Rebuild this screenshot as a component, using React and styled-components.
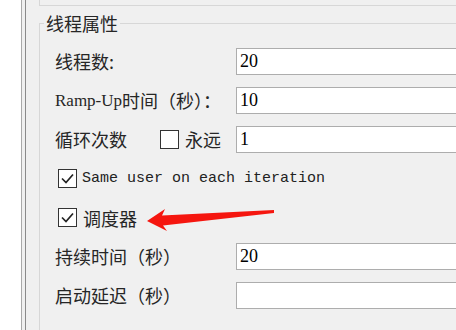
import styled, {createGlobalStyle} from "styled-components";

const GlobalStyle = createGlobalStyle`
  body {
    margin: 0;
    background: #f0f0f0;
    overflow: hidden;
  }
`;

const Page = styled.div`
  display: flex;
  width: 456px;
  height: 330px;
  overflow: hidden;
  font-family: "Noto Sans CJK SC", "Liberation Sans", sans-serif;
  font-size: 18px;
  color: #262626;
`;

const Gutter = styled.div`
  width: 21px;
  flex-shrink: 0;
  background: #ffffff;
`;

const Frame = styled.div`
  flex: 1;
  display: flex;
  border-left: 1px solid #a9a9a9;
  padding-left: 3px;
`;

const Inner = styled.div`
  flex: 1;
  position: relative;
  border-left: 1px solid #8a8a8a;
  padding-left: 13px;
`;

const TopBox = styled.div`
  height: 5px;
  width: 460px;
  border-left: 1px solid #d7d7d7;
  border-bottom: 1px solid #d7d7d7;
`;

const Group = styled.fieldset`
  margin: 6px 0 0;
  width: 460px;
  border: 1px solid #d7d7d7;
  padding: 14px 0 40px 15px;
  min-width: 0;
`;

const Legend = styled.legend`
  margin-left: -11px;
  padding: 0 2px;
  line-height: 22px;
  font-size: 18px;
`;

const Form = styled.div`
  display: flex;
  flex-direction: column;
  gap: 12px;
`;

const Row = styled.div`
  display: flex;
  align-items: center;
  height: 27px;
  padding-left: ${(p) => p.$indent || 0}px;
`;

const Label = styled.div`
  width: 181px;
  flex-shrink: 0;
  display: flex;
  align-items: center;
  line-height: 27px;
  white-space: nowrap;
`;

const Latin = styled.span`
  font-family: "Liberation Serif", serif;
  font-size: 17px;
`;

const Mono = styled.span`
  font-family: "Liberation Mono", monospace;
  font-size: 15px;
  color: #222;
`;

const Field = styled.div`
  flex: 1;
  height: 27px;
  box-sizing: border-box;
  background: #ffffff;
  border: 1px solid #adadad;
  padding-left: 3px;
  font-family: "Liberation Serif", serif;
  font-size: 18px;
  line-height: 25px;
  color: #000;
`;

const Box = styled.span`
  width: 19px;
  height: 19px;
  box-sizing: border-box;
  flex-shrink: 0;
  background: #ffffff;
  border: 1px solid #333333;
  display: inline-flex;
  align-items: center;
  justify-content: center;
  margin-left: ${(p) => p.$left || 0}px;
  margin-right: ${(p) => p.$right || 5}px;
`;

const Arrow = styled.svg`
  position: absolute;
  left: -26px;
  top: 0;
  pointer-events: none;
`;

const Check = ({checked, left, right}) => (
  <Box $left={left} $right={right}>
    {checked && (
      <svg width="17" height="17" viewBox="0 0 17 17">
        <polyline points="3,8.5 7,12.5 14,4.5" fill="none" stroke="#222" strokeWidth="1.7"/>
      </svg>
    )}
  </Box>
);

const App = () => {
  return <>
    <GlobalStyle/>
    <Page>
      <Gutter/>
      <Frame>
        <Inner>
          <TopBox/>
          <Group>
            <Legend>线程属性</Legend>
            <Form>
              <Row>
                <Label>线程数:</Label>
                <Field>20</Field>
              </Row>
              <Row>
                <Label><Latin>Ramp-Up</Latin>时间（秒）：</Label>
                <Field>10</Field>
              </Row>
              <Row>
                <Label>
                  <span>循环次数</span>
                  <Check left={33} right={6}/>
                  <span>永远</span>
                </Label>
                <Field>1</Field>
              </Row>
              <Row $indent={3}>
                <Check checked right={5}/>
                <Mono>Same user on each iteration</Mono>
              </Row>
              <Row $indent={3}>
                <Check checked right={6}/>
                <span>调度器</span>
              </Row>
              <Row>
                <Label>持续时间（秒）</Label>
                <Field>20</Field>
              </Row>
              <Row>
                <Label>启动延迟（秒）</Label>
                <Field/>
              </Row>
            </Form>
          </Group>
          <Arrow width="456" height="330" viewBox="0 0 456 330">
            <polygon
              points="147,221 165,209 162,215.5 274,210 274,213 163,225.5 167,231"
              fill="#f5160f"/>
          </Arrow>
        </Inner>
      </Frame>
    </Page>
  </>
}

export default App;
